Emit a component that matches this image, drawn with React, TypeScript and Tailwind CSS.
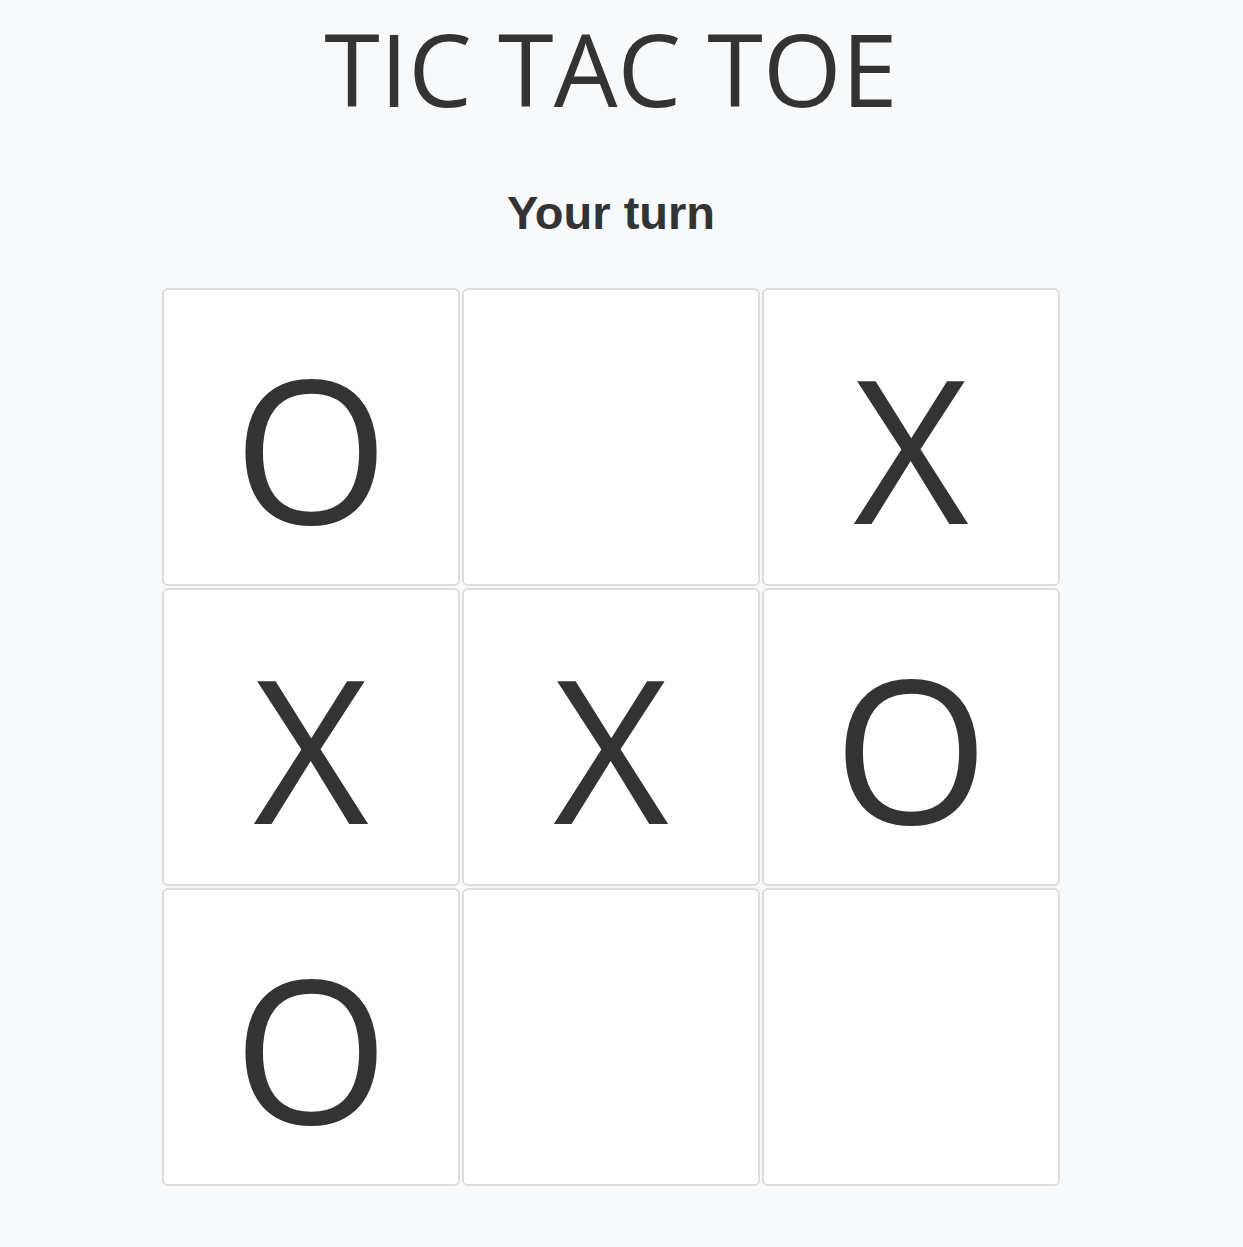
const board = ["O", "", "X", "X", "X", "O", "O", "", ""];

export default function App() {
  return (
    <div className="min-h-screen bg-[#f8f9fa] text-[#333]">
      <div className="w-[1222px] flex flex-col items-center">
        <h1 className="text-[101px] leading-[136px] font-normal font-['Open_Sans',sans-serif]">
          TIC TAC TOE
        </h1>
        <p className="mt-[53px] text-[47px] leading-none font-bold font-['Liberation_Sans',Arial,sans-serif]">
          Your turn
        </p>
        <div className="mt-[52px] grid grid-cols-3 gap-[2px]">
          {board.map((v, i) => (
            <button
              key={i}
              className="w-[298px] h-[298px] pt-5 bg-white border-2 border-[#ddd] rounded-md flex items-center justify-center text-[200px] leading-none font-['Open_Sans',sans-serif] text-[#333]"
            >
              {v}
            </button>
          ))}
        </div>
      </div>
    </div>
  );
}
